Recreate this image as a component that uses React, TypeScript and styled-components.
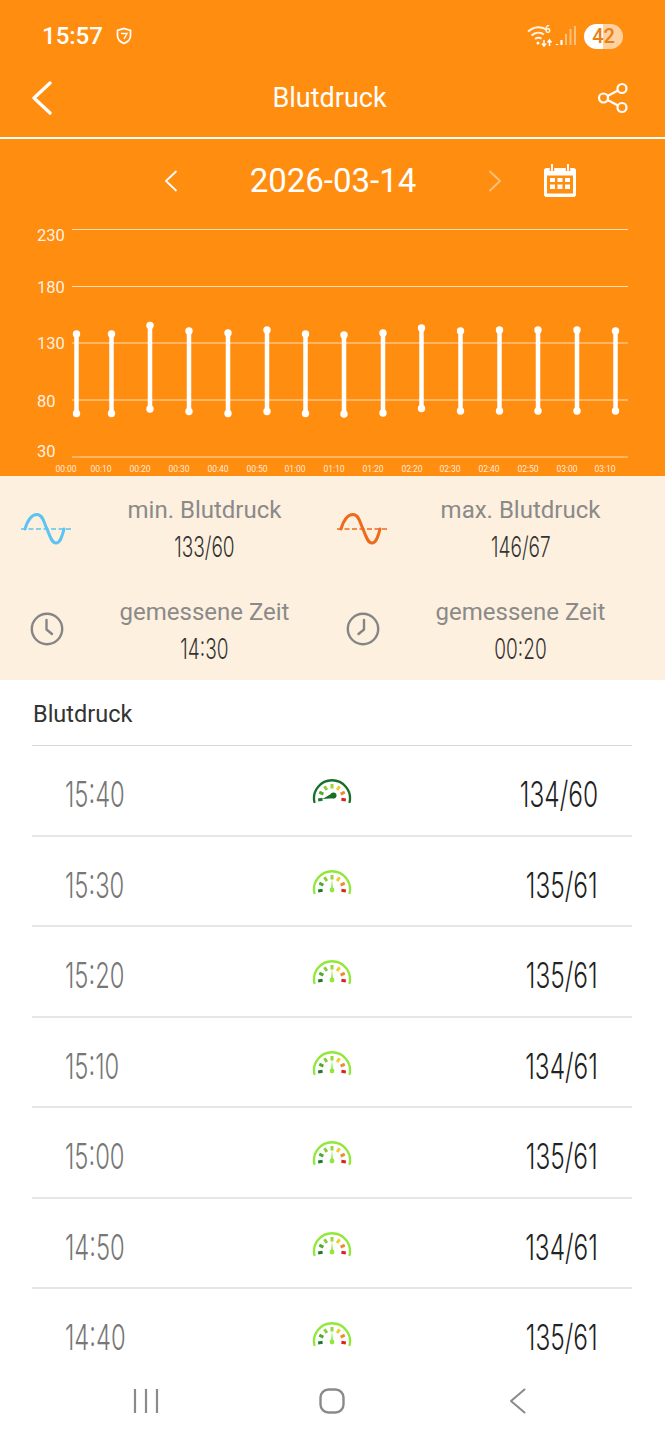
import styled, { createGlobalStyle } from "styled-components";

const ORANGE = "#ff8d10";

const GlobalStyle = createGlobalStyle`
  html, body {
    margin: 0;
    padding: 0;
    background: #fff;
    font-family: Roboto, "Liberation Sans", sans-serif;
  }
`;

const bars = [
  { x: 76.5, top: 334, bottom: 413.5, label: "00:00", lx: 66 },
  { x: 111.5, top: 334, bottom: 413.5, label: "00:10", lx: 101 },
  { x: 150, top: 325.5, bottom: 409, label: "00:20", lx: 140 },
  { x: 189, top: 331, bottom: 411.5, label: "00:30", lx: 179 },
  { x: 228, top: 333, bottom: 413.5, label: "00:40", lx: 218 },
  { x: 267, top: 330, bottom: 411.5, label: "00:50", lx: 257 },
  { x: 305.5, top: 334, bottom: 413.5, label: "01:00", lx: 295 },
  { x: 344, top: 335, bottom: 414, label: "01:10", lx: 334 },
  { x: 383, top: 333, bottom: 413, label: "01:20", lx: 373 },
  { x: 421.5, top: 328, bottom: 408.5, label: "02:20", lx: 412 },
  { x: 460.5, top: 331, bottom: 411, label: "02:30", lx: 450 },
  { x: 499.5, top: 330, bottom: 411, label: "02:40", lx: 489 },
  { x: 538, top: 330, bottom: 411, label: "02:50", lx: 528 },
  { x: 577, top: 330, bottom: 411, label: "03:00", lx: 567 },
  { x: 615.5, top: 331, bottom: 411, label: "03:10", lx: 605 },
];

const gridLines = [
  { y: 229.5, label: "230", ly: 235 },
  { y: 286.5, label: "180", ly: 287 },
  { y: 343, label: "130", ly: 343 },
  { y: 400, label: "80", ly: 401 },
  { y: 457, label: "30", ly: 451 },
];

const rows = [
  { time: "15:40", value: "134/60", dark: true },
  { time: "15:30", value: "135/61" },
  { time: "15:20", value: "135/61" },
  { time: "15:10", value: "134/61" },
  { time: "15:00", value: "135/61" },
  { time: "14:50", value: "134/61" },
  { time: "14:40", value: "135/61" },
];

const tickColors = ["#1c7a2c", "#4fa92f", "#86cf3a", "#9ad63c", "#f3c92f", "#ef8a2a", "#de2020"];

const Gauge = ({ dark }: { dark?: boolean }) => {
  const cx = 20;
  const cy = 21;
  const main = dark ? "#17702a" : "#8fe83a";
  return (
    <svg width="40" height="28" viewBox="0 0 40 28" fill="none">
      <path d="M2.4 25A18 18 0 1 1 37.6 25" stroke={main} strokeWidth="2.3" strokeLinecap="round" />
      {tickColors.map((c, i) => {
        const a = ((-8 + i * 32.7) * Math.PI) / 180;
        const r1 = 9.5;
        const r2 = 14;
        return (
          <line
            key={c}
            x1={cx - r1 * Math.cos(a)}
            y1={cy - r1 * Math.sin(a)}
            x2={cx - r2 * Math.cos(a)}
            y2={cy - r2 * Math.sin(a)}
            stroke={c}
            strokeWidth="3"
          />
        );
      })}
      {dark ? (
        <>
          <circle cx="21.5" cy="18.5" r="3" fill={main} />
          <path d="M20.5 16L10.5 22L22 21.2Z" fill={main} />
        </>
      ) : (
        <>
          <circle cx="20" cy="22" r="2.4" fill={main} />
          <path d="M19 21L20 11L21 21Z" fill={main} />
        </>
      )}
    </svg>
  );
};

const Wave = ({ color }: { color: string }) => (
  <svg width="52" height="36" viewBox="0 -4 52 36" fill="none">
    <path d="M4 16C7 6 11 1.500 16 1.500C22 1.500 23 10 26 16C29 24 31 30 35 30C39 30 41 24 43 16" stroke={color} strokeWidth="3" strokeLinecap="round" />
    <path d="M0 16H52" stroke={color} strokeWidth="1.300" strokeDasharray="5 2.500" />
  </svg>
);

const Clock = ({ hands }: { hands: string }) => (
  <svg width="34" height="34" viewBox="0 0 34 34" fill="none" stroke="#858585" strokeWidth="2.400" strokeLinecap="round" strokeLinejoin="round">
    <circle cx="17" cy="17" r="15.200" />
    <path d={hands} />
  </svg>
);

const App = () => (
  <Page>
    <GlobalStyle />
    <Header>
      <StatusBar>
        <StatusLeft>
          <StatusTime>15:57</StatusTime>
          <svg width="16" height="18" viewBox="0 0 16 18" fill="none" stroke="#fff" strokeWidth="1.700">
            <path d="M8 1.500L14.500 3.500V9C14.500 12.500 11.500 15 8 16.500C4.500 15 1.500 12.500 1.500 9V3.500Z" />
            <path d="M5 6.500H11L8 12" strokeWidth="1.400" />
          </svg>
        </StatusLeft>
        <StatusRight>
          <svg width="50" height="24" viewBox="0 0 50 24" fill="none" stroke="#fff">
            <path d="M1 7.500C7 2 15 2 20 6" strokeWidth="2" opacity="0.9" />
            <path d="M4.500 11.500C8.500 8 13.500 8 17 10.500" strokeWidth="2" opacity="0.9" />
            <path d="M8 15C10 13.500 12.500 13.500 14.500 14.500" strokeWidth="2" opacity="0.9" />
            <circle cx="11" cy="19" r="1.500" fill="#fff" stroke="none" />
            <path d="M17 16V22M15 19.500L17 22L19 19.500M22.500 22V16M20.500 18.500L22.500 16L24.500 18.500" strokeWidth="1.500" />
            <text x="18" y="9" fill="#fff" stroke="none" fontSize="10" fontFamily="Roboto, sans-serif" fontWeight="500">6</text>
            <path d="M30 21V20" stroke="#fff" strokeWidth="2.500" />
            <path d="M34.500 21V16M39 21V10M43.500 21V5M48 21V2" strokeWidth="2" opacity="0.45" />
            <path d="M34.500 21V16" strokeWidth="2" />
          </svg>
          <Battery>42</Battery>
        </StatusRight>
      </StatusBar>
      <NavBar>
        <IconSlot>
          <svg width="24" height="34" viewBox="0 0 24 34" fill="none" stroke="#fff" strokeWidth="3.300" strokeLinecap="round" strokeLinejoin="round">
            <path d="M20 2L4 17L20 32" />
          </svg>
        </IconSlot>
        <Title>Blutdruck</Title>
        <IconSlot $right>
          <svg width="32" height="32" viewBox="0 0 32 32" fill="none" stroke="#fff" strokeWidth="2.200">
            <circle cx="25" cy="6.500" r="4.500" />
            <circle cx="6.500" cy="16" r="4.500" />
            <circle cx="25" cy="25.500" r="4.500" />
            <path d="M10.500 14L21 8.500M10.500 18L21 23.500" />
          </svg>
        </IconSlot>
      </NavBar>
      <Divider />
      <DateBar>
        <DateArrow>
          <svg width="14" height="22" viewBox="0 0 14 22" fill="none" stroke="#fff" strokeWidth="1.800" strokeLinecap="round" strokeLinejoin="round">
            <path d="M12 1.500L2 11L12 20.500" />
          </svg>
        </DateArrow>
        <DateText>2026-03-14</DateText>
        <DateArrow $faded>
          <svg width="14" height="22" viewBox="0 0 14 22" fill="none" stroke="#fff" strokeWidth="1.800" strokeLinecap="round" strokeLinejoin="round">
            <path d="M2 1.500L12 11L2 20.500" />
          </svg>
        </DateArrow>
        <CalendarSlot>
          <svg width="34" height="34" viewBox="0 0 34 34" fill="none">
            <path d="M3.500 4H30.500C32 4 33 5 33 6.500V30.500C33 32 32 33 30.500 33H3.500C2 33 1 32 1 30.500V6.500C1 5 2 4 3.500 4Z" fill="#fff" />
            <path d="M4 11.500H30V29.500H4Z" fill={ORANGE} />
            <path d="M9 1V7M25 1V7" stroke={ORANGE} strokeWidth="4.500" />
            <path d="M9 .5V6M25 .5V6" stroke="#fff" strokeWidth="2" strokeLinecap="round" />
            <path d="M7 14H12V18H7ZM14.500 14H19.500V18H14.500ZM22 14H27V18H22ZM7 20.500H12V25H7ZM14.500 20.500H19.500V25H14.500ZM22 20.500H27V25H22Z" fill="#fff" />
          </svg>
        </CalendarSlot>
      </DateBar>
      <ChartSvg width="665" height="254" viewBox="0 222 665 254">
        {gridLines.map((g) => (
          <g key={g.label}>
            <line x1="72" x2="628" y1={g.y} y2={g.y} stroke="#fff" strokeOpacity="0.7" strokeWidth="1" />
            <text x="37" y={g.ly + 6} fill="#fff" fillOpacity="0.9" fontSize="16.500">{g.label}</text>
          </g>
        ))}
        {bars.map((b) => (
          <g key={b.label} fill="#fff">
            <line x1={b.x} x2={b.x} y1={b.top} y2={b.bottom} stroke="#fff" strokeWidth="4.500" />
            <circle cx={b.x} cy={b.top} r="3.700" />
            <circle cx={b.x} cy={b.bottom} r="3.700" />
            <text x={b.lx} y="472" textAnchor="middle" fillOpacity="0.85" fontSize="8.500">{b.label}</text>
          </g>
        ))}
      </ChartSvg>
    </Header>

    <Stats>
      <Stat>
        <StatIcon><Wave color="#5cc3f2" /></StatIcon>
        <StatText>
          <StatLabel>min. Blutdruck</StatLabel>
          <StatValue>133/60</StatValue>
        </StatText>
      </Stat>
      <Stat>
        <StatIcon><Wave color="#ee6a1c" /></StatIcon>
        <StatText>
          <StatLabel>max. Blutdruck</StatLabel>
          <StatValue>146/67</StatValue>
        </StatText>
      </Stat>
      <Stat>
        <StatIcon><Clock hands="M16.500 8V17.500L22 22" /></StatIcon>
        <StatText>
          <StatLabel>gemessene Zeit</StatLabel>
          <StatValue>14:30</StatValue>
        </StatText>
      </Stat>
      <Stat>
        <StatIcon><Clock hands="M18 8V17.500L12.500 22" /></StatIcon>
        <StatText>
          <StatLabel>gemessene Zeit</StatLabel>
          <StatValue>00:20</StatValue>
        </StatText>
      </Stat>
    </Stats>

    <ListArea>
      <ListTitle>Blutdruck</ListTitle>
      {rows.map((r) => (
        <Row key={r.time}>
          <RowTime>{r.time}</RowTime>
          <GaugeSlot><Gauge dark={r.dark} /></GaugeSlot>
          <RowValue>{r.value}</RowValue>
        </Row>
      ))}
    </ListArea>

    <SystemNav>
      <svg width="26" height="26" viewBox="0 0 26 26" fill="none" stroke="#8a8a8a" strokeWidth="2.200">
        <path d="M2 1V25M13 1V25M24 1V25" />
      </svg>
      <svg width="26" height="26" viewBox="0 0 26 26" fill="none" stroke="#8a8a8a" strokeWidth="2.400">
        <rect x="1.500" y="1.500" width="23" height="23" rx="8" />
      </svg>
      <svg width="18" height="26" viewBox="0 0 18 26" fill="none" stroke="#8a8a8a" strokeWidth="2" strokeLinecap="round" strokeLinejoin="round">
        <path d="M15.500 1.500L2 13L15.500 24.500" />
      </svg>
    </SystemNav>
  </Page>
);

export default App;

const Page = styled.div`
  width: 665px;
  height: 1440px;
  display: flex;
  flex-direction: column;
  overflow: hidden;
  background: #fff;
`;

const Header = styled.header`
  flex: none;
  height: 476px;
  display: flex;
  flex-direction: column;
  background: ${ORANGE};
`;

const StatusBar = styled.div`
  flex: none;
  height: 72px;
  padding: 0 42px;
  display: flex;
  align-items: center;
  justify-content: space-between;
`;

const StatusLeft = styled.div`
  display: flex;
  align-items: center;
  gap: 13px;
`;

const StatusTime = styled.span`
  font-size: 24px;
  font-weight: 500;
  color: #fff;
`;

const StatusRight = styled.div`
  display: flex;
  align-items: center;
  gap: 7px;
`;

const Battery = styled.span`
  width: 39px;
  height: 25px;
  border-radius: 13px;
  display: flex;
  align-items: center;
  justify-content: center;
  font-size: 20px;
  font-weight: 500;
  color: #ea8014;
  background: linear-gradient(90deg, #fff 0 50%, rgba(255, 255, 255, 0.6) 50% 100%);
`;

const NavBar = styled.div`
  flex: none;
  height: 65px;
  box-sizing: border-box;
  padding: 0 36px 14px 30px;
  display: flex;
  align-items: center;
  justify-content: space-between;
`;

const IconSlot = styled.div<{ $right?: boolean }>`
  width: 40px;
  display: flex;
  justify-content: ${(p) => (p.$right ? "flex-end" : "flex-start")};
`;

const Title = styled.div`
  font-size: 27px;
  color: #fff;
`;

const Divider = styled.div`
  flex: none;
  height: 2px;
  background: #fff;
`;

const DateBar = styled.div`
  flex: none;
  height: 83px;
  display: grid;
  grid-template-columns: 164px 14px 310px 14px 1fr;
  align-items: center;
  color: #fff;
`;

const DateArrow = styled.div<{ $faded?: boolean }>`
  grid-column: ${(p) => (p.$faded ? 4 : 2)};
  display: flex;
  opacity: ${(p) => (p.$faded ? 0.45 : 1)};
`;

const DateText = styled.div`
  grid-column: 3;
  text-align: center;
  font-size: 33px;
`;

const CalendarSlot = styled.div`
  grid-column: 5;
  padding-left: 41px;
  display: flex;
`;

const ChartSvg = styled.svg`
  display: block;
  flex: none;
  font-family: Roboto, "Liberation Sans", sans-serif;
`;

const Stats = styled.section`
  flex: none;
  height: 204px;
  display: grid;
  grid-template-columns: 316px 316px;
  grid-auto-rows: 102px;
  background: #fef0df;
`;

const Stat = styled.div`
  display: grid;
  grid-template-columns: 93px 1fr;
  align-items: center;
`;

const StatIcon = styled.div`
  display: flex;
  justify-content: center;
`;

const StatText = styled.div`
  padding-top: 4px;
  display: flex;
  flex-direction: column;
  align-items: center;
  gap: 3px;
`;

const StatLabel = styled.div`
  font-size: 24px;
  line-height: 32px;
  color: #8a8a8a;
`;

const StatValue = styled.div`
  font-family: Inter, Roboto, sans-serif;
  font-size: 28px;
  font-weight: 300;
  line-height: 36px;
  color: #333;
  transform: scaleX(0.68);
`;

const ListArea = styled.section`
  flex: 1;
  min-height: 0;
  overflow: hidden;
  padding: 0 33px 0 32px;
`;

const ListTitle = styled.div`
  height: 66px;
  box-sizing: border-box;
  padding: 3px 0 0 1px;
  display: flex;
  align-items: center;
  font-size: 23.5px;
  color: #333;
  border-bottom: 1px solid #d8d8d8;
`;

const Row = styled.div`
  height: 90.5px;
  box-sizing: border-box;
  padding: 0 34px 0 33px;
  display: grid;
  grid-template-columns: 1fr 40px 1fr;
  align-items: center;
  border-bottom: 2px solid #e6e6e6;
`;

const GaugeSlot = styled.div`
  display: flex;
  padding-top: 2px;
`;

const RowTime = styled.div`
  justify-self: start;
  padding-top: 8px;
  font-family: Inter, Roboto, sans-serif;
  font-size: 36px;
  font-weight: 300;
  color: #777;
  transform: scaleX(0.66);
  transform-origin: left center;
`;

const RowValue = styled.div`
  justify-self: end;
  padding-top: 8px;
  font-family: Inter, Roboto, sans-serif;
  font-size: 36px;
  font-weight: 300;
  color: #222;
  transform: scaleX(0.68);
  transform-origin: right center;
`;

const SystemNav = styled.nav`
  flex: none;
  height: 75px;
  box-sizing: border-box;
  padding: 0 0 3px 133px;
  display: grid;
  grid-template-columns: 186px 190px 1fr;
  align-items: center;
  background: #fff;
`;
